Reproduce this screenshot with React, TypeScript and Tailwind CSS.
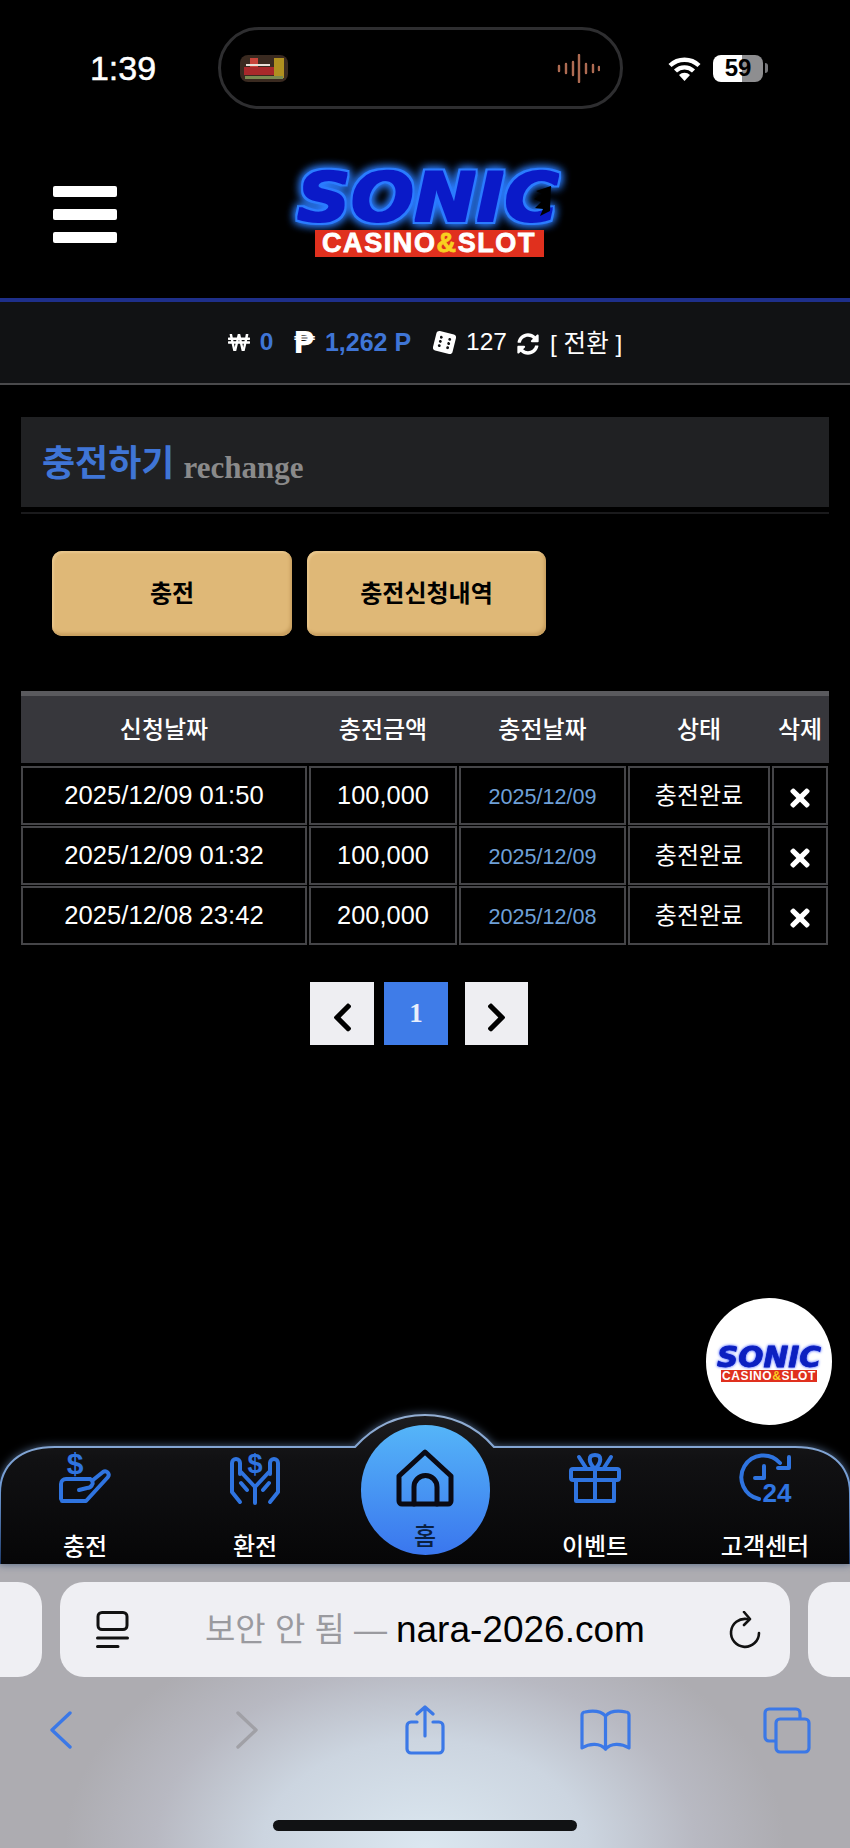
import { FaChevronLeft, FaChevronRight, FaDiceSix, FaSyncAlt, FaTimes, FaWonSign } from "react-icons/fa";

const rows = [
  { requested: "2025/12/09 01:50", amount: "100,000", date: "2025/12/09" },
  { requested: "2025/12/09 01:32", amount: "100,000", date: "2025/12/09" },
  { requested: "2025/12/08 23:42", amount: "200,000", date: "2025/12/08" },
];

const cell = "flex items-center justify-center border-2 border-[#454548] bg-black";

function NavIcon({ children }: { children: React.ReactNode }) {
  return (
    <svg viewBox="0 0 52 50" className="h-[50px] w-[52px] overflow-visible" fill="none" stroke="#2f74e0" strokeWidth="4" strokeLinecap="round" strokeLinejoin="round">
      {children}
    </svg>
  );
}

function NavItem({ label, children }: { label: string; children: React.ReactNode }) {
  return (
    <div className="flex flex-col items-center pt-[38px]">
      {children}
      <span className="mt-[29px] text-[24px] leading-[30px] font-medium text-white">{label}</span>
    </div>
  );
}

function App() {
  return (
    <div className="relative flex h-[1848px] w-[850px] flex-col overflow-hidden bg-black font-['Liberation_Sans','Noto_Sans_CJK_KR',sans-serif] text-white">
      {/* status bar */}
      <div className="flex h-[109px] items-end pt-[27px]">
        <div className="flex h-[82px] w-[218px] items-center justify-center pl-[28px] text-[34px] [-webkit-text-stroke:0.5px_#fff]">
          1:39
        </div>
        <div className="flex h-[82px] w-[405px] items-center justify-between rounded-full border-[3px] border-[#2e2e30] pr-[20px] pl-[19px]">
          <svg viewBox="0 0 48 27" className="h-[27px] w-[48px]">
            <rect width="48" height="27" rx="8" fill="#3a2a20" />
            <rect x="4" y="12" width="30" height="8" fill="#a8282a" />
            <rect x="10" y="3" width="8" height="9" fill="#c8443a" />
            <rect x="34" y="3" width="10" height="20" fill="#b09020" />
            <rect x="5" y="21" width="38" height="3" fill="#7a8a50" />
            <rect x="6" y="9" width="24" height="2" fill="#e8e0d8" />
          </svg>
          <svg viewBox="0 0 43 29" className="h-[29px] w-[43px]" stroke="#ae6b52" strokeWidth="2.4" strokeLinecap="round">
            <path d="M2 12v5M9 10v9M16 8v13M22 1v27M29 10v9M36 11v7M42 13v3" />
          </svg>
        </div>
        <div className="flex h-[82px] items-center pl-[45px]">
          <svg viewBox="0 0 33 25" className="h-[25px] w-[33px]" fill="none" stroke="#fff" strokeWidth="4.4">
            <path d="M2 9.5a21 21 0 0 1 29 0" />
            <path d="M7.5 15a13 13 0 0 1 18 0" />
            <path d="M16.5 25l-5.500-6a8 8 0 0 1 11 0z" fill="#fff" stroke="none" />
          </svg>
          <div className="ml-[12px] flex h-[27px] w-[50px] items-center justify-center rounded-[8px] bg-[linear-gradient(90deg,#ffffff_0%,#ffffff_59%,#8e8e90_59%,#8e8e90_100%)] text-[24px] font-bold text-black">
            59
          </div>
          <div className="ml-[2px] h-[10px] w-[3px] rounded-r-full bg-[#77777a]"></div>
        </div>
      </div>

      {/* header */}
      <div className="flex h-[189px] items-center pt-[22px] pl-[53px]">
        <div className="flex w-[64px] flex-col gap-[12px]">
          <div className="h-[11px] rounded-[2px] bg-white"></div>
          <div className="h-[11px] rounded-[2px] bg-white"></div>
          <div className="h-[11px] rounded-[2px] bg-white"></div>
        </div>
        <div className="mt-[-6px] ml-[176px] flex w-[272px] flex-col items-center">
          <svg viewBox="0 0 272 62" className="h-[62px] w-[272px] overflow-visible">
            <defs>
              <filter id="neon" x="-10%" y="-30%" width="120%" height="160%" colorInterpolationFilters="sRGB">
                <feMorphology in="SourceAlpha" operator="dilate" radius="3" result="outer" />
                <feFlood floodColor="#2a7cff" />
                <feComposite in2="outer" operator="in" result="edge" />
                <feMorphology in="SourceAlpha" operator="dilate" radius="1.2" result="inner" />
                <feFlood floodColor="#0a1ac8" />
                <feComposite in2="inner" operator="in" result="core" />
                <feGaussianBlur in="edge" stdDeviation="5" result="glow" />
                <feMerge>
                  <feMergeNode in="glow" />
                  <feMergeNode in="glow" />
                  <feMergeNode in="edge" />
                  <feMergeNode in="core" />
                </feMerge>
              </filter>
            </defs>
            <text x="4" y="55" textLength="262" lengthAdjust="spacingAndGlyphs" fontFamily="DejaVu Sans" fontWeight="bold" fontStyle="italic" fontSize="68" fill="#0a1ac8" filter="url(#neon)">
              SONIC
            </text>
            <path d="M258 20l-15 5 6 3-8 5 7 3-6 6 8 1-3 7 10-5z" fill="#000" />
          </svg>
          <div className="mt-[2px] flex h-[27px] w-[229px] items-center justify-center bg-[#e0301e] text-[27px] font-bold tracking-[1.6px] text-white [-webkit-text-stroke:0.8px_#fff]">
            CASINO<span className="text-[#f8d020] [-webkit-text-stroke:0.8px_#f8d020]">&amp;</span>SLOT
          </div>
        </div>
      </div>

      {/* balance bar */}
      <div className="flex h-[87px] items-center justify-center border-t-4 border-b-2 border-t-[#1e2f8a] border-b-[#4a4a4c] bg-[#111214] text-[24.5px]">
        <FaWonSign className="h-[25px] w-[22px] text-white" />
        <span className="ml-[10px] font-bold text-[#3f75d6]">0</span>
        <span className="ml-[20px] font-['DejaVu_Sans'] text-[31px] leading-none font-bold text-white">₱</span>
        <span className="ml-[10px] text-[25px] font-bold text-[#3f75d6]">1,262 P</span>
        <FaDiceSix className="ml-[22px] h-[23px] w-[23px] rotate-[14deg] text-white" />
        <span className="ml-[10px]">127</span>
        <FaSyncAlt className="mt-[3px] ml-[10px] h-[22px] w-[22px] text-white" />
        <span className="mt-[3px] ml-[11px]">[ 전환 ]</span>
      </div>

      {/* content */}
      <div className="px-[21px]">
        <div className="mt-[32px] flex h-[90px] items-center bg-[#202123] pl-[21px]">
          <span className="pt-[3px] text-[36px] font-bold text-[#3f75d6]">충전하기</span>
          <span className="mt-[12px] ml-[9px] font-['Liberation_Serif'] text-[31px] font-bold text-[#8a8a8a]">rechange</span>
        </div>
        <div className="mt-[5px] h-[2px] bg-[#1a1a1c]"></div>

        <div className="mt-[37px] flex gap-[15px] pl-[31px]">
          <div className="flex h-[85px] w-[240px] items-center justify-center rounded-[10px] bg-[#dfb877] text-[24px] font-bold text-black shadow-[inset_-2px_-3px_3px_#c9a060,inset_2px_2px_2px_#e8c68c]">
            충전
          </div>
          <div className="flex h-[85px] w-[239px] items-center justify-center rounded-[10px] bg-[#dfb877] text-[24px] font-bold text-black shadow-[inset_-2px_-3px_3px_#c9a060,inset_2px_2px_2px_#e8c68c]">
            충전신청내역
          </div>
        </div>

        <div className="mt-[55px] grid grid-cols-[286px_148px_167px_142px_56px] gap-x-[2px] border-t-[5px] border-t-[#5a5a5e] bg-[#37373c] text-[24px] font-medium">
          <div className="flex h-[67px] items-center justify-center">신청날짜</div>
          <div className="flex h-[67px] items-center justify-center">충전금액</div>
          <div className="flex h-[67px] items-center justify-center">충전날짜</div>
          <div className="flex h-[67px] items-center justify-center">상태</div>
          <div className="flex h-[67px] items-center justify-center">삭제</div>
        </div>

        <div className="mt-[3px] flex flex-col gap-y-[1px]">
          {rows.map((row) => (
            <div key={row.requested} className="grid h-[59px] grid-cols-[286px_148px_167px_142px_56px] gap-x-[2px]">
              <div className={`${cell} text-[25.6px]`}>{row.requested}</div>
              <div className={`${cell} text-[25.4px]`}>{row.amount}</div>
              <div className={`${cell} pt-[3px] text-[21.6px] text-[#6fa0d8]`}>{row.date}</div>
              <div className={`${cell} text-[24px]`}>충전완료</div>
              <div className={cell}>
                <FaTimes className="mt-[4px] h-[28px] w-[20px] text-white" />
              </div>
            </div>
          ))}
        </div>

        <div className="mt-[37px] ml-[289px] flex">
          <div className="flex h-[63px] w-[64px] items-center justify-center bg-[#eeeef2] pt-[8px] text-black">
            <FaChevronLeft className="h-[33px] w-[23px]" />
          </div>
          <div className="ml-[10px] flex h-[63px] w-[64px] items-center justify-center bg-[#3f7ce8] font-['Liberation_Serif'] text-[27px] font-bold text-[#e8eefc]">
            1
          </div>
          <div className="ml-[17px] flex h-[63px] w-[63px] items-center justify-center bg-[#eeeef2] pt-[8px] text-black">
            <FaChevronRight className="h-[33px] w-[23px]" />
          </div>
        </div>
      </div>

      {/* floating logo */}
      <div className="absolute top-[1298px] left-[706px] flex h-[127px] w-[126px] flex-col items-center justify-center rounded-full bg-white pt-[3px]">
        <svg viewBox="0 0 106 25" className="h-[25px] w-[106px] overflow-visible drop-shadow-[0_0_1.5px_#2040ff]">
          <text x="1" y="23" textLength="104" lengthAdjust="spacingAndGlyphs" fontFamily="DejaVu Sans" fontWeight="bold" fontStyle="italic" fontSize="29" fill="#0c20c0" stroke="#0c20c0" strokeWidth="0.8">
            SONIC
          </text>
        </svg>
        <div className="mt-[1px] flex h-[12px] w-[96px] items-center justify-center bg-[#e0301e] text-[12px] leading-none font-bold tracking-[0.6px] text-white">
          CASINO<span className="text-[#f8d020]">&amp;</span>SLOT
        </div>
      </div>

      {/* bottom nav */}
      <div className="relative mt-auto h-[149px]">
        <svg viewBox="0 0 850 149" className="absolute inset-0 h-[149px] w-[850px] overflow-visible drop-shadow-[0_0_4px_#4a6080]">
          <defs>
            <linearGradient id="navFill" x1="0" y1="0" x2="0" y2="1">
              <stop offset="0" stopColor="#1d1d20" />
              <stop offset="0.3" stopColor="#111113" />
              <stop offset="1" stopColor="#060607" />
            </linearGradient>
            <linearGradient id="navStroke" x1="0" y1="0" x2="0" y2="1">
              <stop offset="0" stopColor="#93aed2" />
              <stop offset="0.5" stopColor="#6f9ad4" />
              <stop offset="1" stopColor="#1d3a6a" />
            </linearGradient>
          </defs>
          <path
            d="M0 149V78C0 50 20 32 55 32H355C375 10 400 0 425 0S475 10 494 32H795C830 32 850 50 850 78V149"
            fill="url(#navFill)"
            stroke="url(#navStroke)"
            strokeWidth="2"
          />
        </svg>
        <div className="relative grid grid-cols-5">
          <NavItem label="충전">
            <NavIcon>
              <path d="M3 48H27L49 24a3.600 3.600 0 0 0-5-5L34 27" />
              <path d="M2 46V31a5 5 0 0 1 5-5H31a4 4 0 0 1 2 6c-1 2-3 3-5 3L20 37" />
              <text x="16" y="21" fontSize="30" fontWeight="bold" fontFamily="Liberation Sans" fill="#2f74e0" stroke="none" textAnchor="middle">$</text>
            </NavIcon>
          </NavItem>
          <NavItem label="환전">
            <NavIcon>
              <path d="M11 49L3 39V10a4 4 0 0 1 8 0V21" />
              <path d="M41 49l8-10V10a4 4 0 0 0-8 0V21" />
              <path d="M12 19l14 15V50M40 19L26 34" />
              <path d="M12 30l6 7M40 30l-6 7" />
              <text x="26" y="20" fontSize="27" fontWeight="bold" fontFamily="Liberation Sans" fill="#2f74e0" stroke="none" textAnchor="middle">$</text>
            </NavIcon>
          </NavItem>
          <div className="flex justify-center pt-[10px]">
            <div className="flex h-[130px] w-[129px] flex-col items-center rounded-full bg-[linear-gradient(180deg,#55b5f8_0%,#3a76ee_100%)] pt-[24px]">
              <svg viewBox="0 0 58 58" className="h-[58px] w-[58px]" fill="none" stroke="#0a0a14" strokeWidth="5" strokeLinecap="round" strokeLinejoin="round">
                <path d="M29 3L55 27V52a3 3 0 0 1-3 3H6a3 3 0 0 1-3-3V27Z" />
                <path d="M18 55V38a11.500 11.500 0 0 1 23 0V55" />
              </svg>
              <span className="mt-[17px] text-[24px] leading-[26px] font-medium text-[#0a2040]">홈</span>
            </div>
          </div>
          <NavItem label="이벤트">
            <NavIcon>
              <rect x="2" y="16" width="48" height="11" rx="2" />
              <path d="M7 27V48H45V27M26 16V48" />
              <path d="M26 16C19 9 19 2 26 2S33 9 26 16Z" />
              <path d="M10 4L17 15M42 4L35 15" />
            </NavIcon>
          </NavItem>
          <NavItem label="고객센터">
            <NavIcon>
              <path d="M20 46A22 22 0 1 1 41 10" />
              <path d="M50 4V15H39" />
              <path d="M25 13V25H16" />
              <text x="38" y="49" fontSize="26" fontWeight="bold" fontFamily="Liberation Sans" fill="#2f74e0" stroke="none" textAnchor="middle">24</text>
            </NavIcon>
          </NavItem>
        </div>
      </div>

      {/* safari chrome */}
      <div className="h-[284px] bg-[radial-gradient(ellipse_360px_240px_at_50%_100%,#dbe7f0_0%,#ccd5e0_45%,#b8b9c2_75%,#adacb1_100%)]">
        <div className="flex gap-[18px] pt-[18px]">
          <div className="h-[95px] w-[42px] rounded-r-[24px] bg-[#efeff3]"></div>
          <div className="flex h-[95px] w-[730px] items-center rounded-[24px] bg-[#efeff3]">
            <svg viewBox="0 0 33 37" className="ml-[36px] h-[37px] w-[33px]" fill="none" stroke="#111" strokeWidth="3" strokeLinecap="round">
              <rect x="2" y="1.5" width="29" height="17" rx="4" />
              <path d="M1.5 27H31.5M1.5 35.5H22" />
            </svg>
            <span className="ml-[76px] text-[33px] whitespace-nowrap text-[#9a9a9f]">보안 안 됨 — </span>
            <span className="ml-[9px] text-[37px] text-black">nara-2026.com</span>
            <svg viewBox="0 0 32 38" className="ml-[84px] h-[38px] w-[32px]" fill="none" stroke="#111" strokeWidth="2.6" strokeLinecap="round" strokeLinejoin="round">
              <path d="M18 8A14 14 0 1 0 30 22" />
              <path d="M15 1L21 8L15 14" />
            </svg>
          </div>
          <div className="h-[95px] w-[42px] rounded-l-[24px] bg-[#efeff3]"></div>
        </div>
        <div className="mt-[24px] flex h-[58px] items-center">
          <svg viewBox="0 0 22 38" className="ml-[50px] h-[38px] w-[22px]" fill="none" stroke="#3b78e7" strokeWidth="3.4" strokeLinecap="round" strokeLinejoin="round">
            <path d="M20 2L2 19L20 36" />
          </svg>
          <svg viewBox="0 0 22 38" className="ml-[164px] h-[38px] w-[22px]" fill="none" stroke="#a0a0a6" strokeWidth="3.4" strokeLinecap="round" strokeLinejoin="round">
            <path d="M2 2L20 19L2 36" />
          </svg>
          <svg viewBox="0 0 40 50" className="ml-[147px] h-[50px] w-[40px]" fill="none" stroke="#3b78e7" strokeWidth="3.2" strokeLinecap="round" strokeLinejoin="round">
            <path d="M12 17H6a4 4 0 0 0-4 4V44a4 4 0 0 0 4 4H34a4 4 0 0 0 4-4V21a4 4 0 0 0-4-4H28" />
            <path d="M20 31V2M12 9L20 2L28 9" />
          </svg>
          <svg viewBox="0 0 51 42" className="ml-[135px] h-[42px] w-[51px]" fill="none" stroke="#3b78e7" strokeWidth="3.2" strokeLinecap="round" strokeLinejoin="round">
            <path d="M25.5 7C21 2 13 1.500 5 3a3 3 0 0 0-3 3V39C10 34 20 34 25.500 40C31 34 41 34 49 39V6a3 3 0 0 0-3-3C38 1.500 30 2 25.500 7Z" />
            <path d="M25.500 7V40" />
          </svg>
          <svg viewBox="0 0 48 47" className="ml-[132px] h-[47px] w-[48px]" fill="none" stroke="#3b78e7" strokeWidth="3.2" strokeLinejoin="round">
            <path d="M37 12V6a4 4 0 0 0-4-4H6a4 4 0 0 0-4 4V30a4 4 0 0 0 4 4H13" />
            <rect x="13" y="12" width="33" height="33" rx="4" />
          </svg>
        </div>
        <div className="mx-auto mt-[61px] h-[11px] w-[304px] rounded-full bg-[#111214]"></div>
      </div>
    </div>
  );
}

export default App;
